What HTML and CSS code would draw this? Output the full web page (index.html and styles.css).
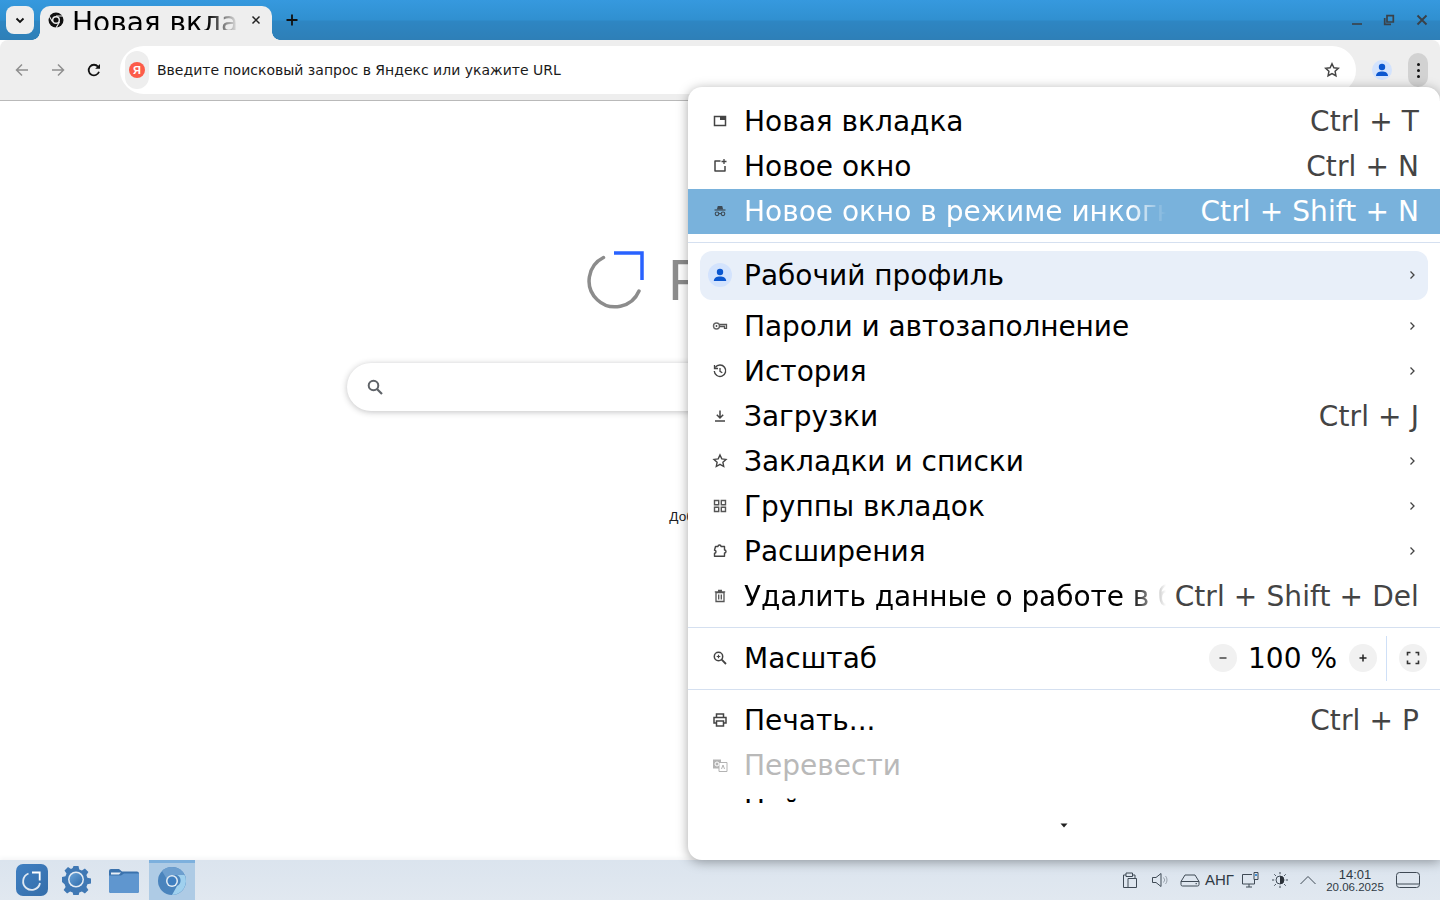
FILE: index.html
```html
<!DOCTYPE html>
<html lang="ru">
<head>
<meta charset="utf-8">
<title>Новая вкладка</title>
<link rel="stylesheet" href="styles.css">
</head>
<body>
<div class="screen">
  <header class="titlebar">
    <button class="tabsearch"><svg width="12" height="12" viewBox="0 0 12 12"><path d="M2.5 4.5 6 8l3.5-3.5" fill="none" stroke="#111" stroke-width="1.8"/></svg></button>
    <div class="tab">
      <svg class="tab-favicon" width="16" height="16" viewBox="0 0 16 16"><circle cx="8" cy="8" r="7.500" fill="#111"/><circle cx="8" cy="8" r="4" fill="#eee"/><circle cx="8" cy="8" r="2.600" fill="#111"/><path d="M8 4h7M4.600 10 1.300 4.300M11.500 10l-3.400 5.800" stroke="#eee" stroke-width="1.100"/></svg>
      <div class="tab-title">Новая вкладка</div>
      <svg class="tab-close" width="10" height="10" viewBox="0 0 10 10"><path d="M1.500 1.500l7 7M8.500 1.500l-7 7" stroke="#222" stroke-width="1.500"/></svg>
    </div>
    <button class="newtab"><svg width="12" height="12" viewBox="0 0 12 12"><path d="M6 .5v11M.5 6h11" stroke="#111" stroke-width="1.800"/></svg></button>
    <div class="winctrls">
      <svg width="12" height="12" viewBox="0 0 12 12"><path d="M1 10h10" stroke="#3a4148" stroke-width="1.600"/></svg>
      <svg width="12" height="12" viewBox="0 0 12 12"><path d="M1.700 4v6.300H8M4 1.700h6.300V8H4z" fill="none" stroke="#3a4148" stroke-width="1.700"/></svg>
      <svg class="win-close" width="12" height="12" viewBox="0 0 12 12"><path d="M1.500 1.500l9 9M10.500 1.500l-9 9" stroke="#3a4148" stroke-width="1.900"/></svg>
    </div>
  </header>

  <nav class="toolbar">
    <svg class="nav-ic" width="16" height="16" viewBox="0 0 16 16"><path d="M14 8H2.500M8 2.500 2.500 8 8 13.500" fill="none" stroke="#8f8f8f" stroke-width="1.500"/></svg>
    <svg class="nav-ic" width="16" height="16" viewBox="0 0 16 16"><path d="M2 8h11.500M8 2.500 13.500 8 8 13.500" fill="none" stroke="#8f8f8f" stroke-width="1.500"/></svg>
    <svg class="nav-ic" width="16" height="16" viewBox="0 0 16 16"><path d="M13 9.800A5.300 5.300 0 1 1 12 4.600" fill="none" stroke="#111" stroke-width="1.800"/><path d="M14 2v4.800H9.200z" fill="#111"/></svg>
    <div class="omnibox">
      <div class="chip"><span class="ya">Я</span></div>
      <span class="omni-text">Введите поисковый запрос в Яндекс или укажите URL</span>
      <svg class="omni-star" width="16" height="16" viewBox="0 0 16 16"><path d="M8 1.800l1.900 4 4.400.5-3.200 3 .8 4.400L8 11.500l-3.900 2.200.8-4.400-3.200-3 4.400-.5z" fill="none" stroke="#444" stroke-width="1.500"/></svg>
    </div>
    <span class="avatar"><svg width="14" height="14" viewBox="0 0 14 14"><circle cx="7" cy="4" r="3.200" fill="#0b57d0"/><path d="M1 13c0-3.300 2.700-4.600 6-4.600s6 1.300 6 4.600z" fill="#0b57d0"/></svg></span>
    <span class="kebab"><i></i><i></i><i></i></span>
  </nav>

  <main class="page">
    <div class="logo">
      <svg width="60" height="60" viewBox="0 0 60 60"><path d="M16.500 7.500A26 26 0 1 0 52 41" fill="none" stroke="#8c8c8c" stroke-width="3.500" stroke-linecap="round"/><path d="M27 3h28v27" fill="none" stroke="#2962ff" stroke-width="3.500"/></svg>
      <span class="logo-text">РЕД ОС</span>
    </div>
    <div class="search">
      <svg width="18" height="18" viewBox="0 0 18 18"><circle cx="7.500" cy="7.500" r="4.800" fill="none" stroke="#5f6368" stroke-width="2"/><path d="M11 11l5 5" stroke="#5f6368" stroke-width="2.200"/></svg>
    </div>
    <div class="addshortcut">Добавить ярлык</div>
  </main>

  <footer class="taskbar">
    <span class="start"><svg width="32" height="32" viewBox="0 0 32 32"><path d="M12.500 9.500A8.500 8.500 0 1 0 24 19" fill="none" stroke="#dfe8f2" stroke-width="1.800"/><path d="M16 8.500h7.700v8" fill="none" stroke="#fff" stroke-width="1.800"/></svg></span>
    <span class="tb-app"><svg width="30" height="30" viewBox="0 0 30 30"><path d="M12.500 1.500h5l.8 3.500 2.600 1 3-2 3.500 3.500-2 3 1 2.700 3.600.8v5l-3.600.8-1 2.600 2 3-3.500 3.500-3-2-2.600 1-.8 3.600h-5l-.8-3.600-2.600-1-3 2-3.500-3.500 2-3-1-2.600L1 17.500v-5l3.500-.8 1-2.700-2-3L7 2.500l3 2 1.700-1z" fill="#3f78b4" transform="translate(0 -.5)"/><circle cx="15" cy="14.500" r="8" fill="#e3ebf3"/><circle cx="15" cy="14.500" r="6.500" fill="url(#g1)"/><defs><linearGradient id="g1" x1="0" y1="0" x2="1" y2="1"><stop offset="0" stop-color="#6aa3d8"/><stop offset="1" stop-color="#2f6cab"/></linearGradient></defs></svg></span>
    <span class="tb-app"><svg width="32" height="28" viewBox="0 0 32 28"><path d="M1 5a2 2 0 0 1 2-2h8l3 2.500h15a2 2 0 0 1 2 2V25a2 2 0 0 1-2 2H3a2 2 0 0 1-2-2z" fill="#3a72ad"/><path d="M1 9.500h12l3-2h15V25a2 2 0 0 1-2 2H3a2 2 0 0 1-2-2z" fill="#5f96cf"/><path d="M3 8.500h8l2-2H3z" fill="#e8eff7"/></svg></span>
    <span class="tb-active"><svg width="28" height="28" viewBox="0 0 28 28"><circle cx="14" cy="14" r="14" fill="#4a84bd"/><path d="M14 0a14 14 0 0 1 12.600 8H14a6 6 0 0 0-5.500 3.500L4 4A14 14 0 0 1 14 0z" fill="#6d9fcf"/><path d="M26.600 8A14 14 0 0 1 14 28l5-9a6 6 0 0 0 0-11z" fill="#9fd0ee"/><circle cx="14" cy="14" r="6" fill="#e4edf5"/><circle cx="14" cy="14" r="4.500" fill="#3f7fc0"/></svg></span>
    <div class="tray">
      <svg class="t-clip" width="18" height="18" viewBox="0 0 18 18"><path d="M2.500 16.500V4h2.500M11.500 4h2.500v3M5 2h6.500v3.500H5zM7 7.500h8.500v9H7zM2.500 16.500H7" fill="none" stroke="#3f4a55" stroke-width="1"/></svg>
      <svg class="t-vol" width="18" height="18" viewBox="0 0 18 18"><path d="M1.500 6.500h3.500L10 2.500v13L5 11.500H1.500z" fill="none" stroke="#3f4a55" stroke-width="1"/><path d="M12.500 6.500a3.500 3.500 0 0 1 0 5M14.500 5a6 6 0 0 1 0 8" fill="none" stroke="#9aa3ad" stroke-width="1"/></svg>
      <svg class="t-drive" width="20" height="18" viewBox="0 0 20 18"><path d="M1 10.500 5 4h10l4 6.500v3a1.500 1.500 0 0 1-1.500 1.500h-15A1.500 1.500 0 0 1 1 13.500zM1 10.500h18M15.500 12.700h1.500" fill="none" stroke="#3f4a55" stroke-width="1"/></svg>
      <span class="lang">АНГ</span>
      <svg class="t-net" width="18" height="18" viewBox="0 0 18 18"><path d="M11 3.500H1.500v9.500h12V9M5 16h6M8 13v3" fill="none" stroke="#3f4a55" stroke-width="1"/><path d="M13 1.500h4v7h-4z" fill="#dfe6ee" stroke="#3f4a55" stroke-width="1"/><path d="M14 3h2v2h-2z" fill="#3f8fd8"/></svg>
      <svg class="t-sun" width="18" height="18" viewBox="0 0 18 18"><circle cx="9" cy="9" r="4" fill="none" stroke="#3f4a55" stroke-width="1"/><path d="M9 5a4 4 0 0 1 0 8z" fill="#2b3138"/><path d="M9 1v2.200M9 14.800V17M1 9h2.200M14.800 9H17M3.300 3.300l1.600 1.600M13.100 13.100l1.600 1.600M3.300 14.700l1.600-1.600M13.100 4.900l1.600-1.600" stroke="#3f4a55" stroke-width="1"/></svg>
      <svg class="t-up" width="18" height="18" viewBox="0 0 18 18"><path d="M1.500 13 9 5.500l7.500 7.500" fill="none" stroke="#3f4a55" stroke-width="1"/></svg>
      <div class="clock"><span class="clock-time">14:01</span><span class="clock-date">20.06.2025</span></div>
      <svg class="t-desk" width="24" height="18" viewBox="0 0 24 18"><rect x=".5" y="1.500" width="23" height="15" rx="3" fill="none" stroke="#3f4a55" stroke-width="1"/><path d="M1 13h22" stroke="#3f4a55" stroke-width="1"/></svg>
    </div>
  </footer>

  <div class="menu">
    <div class="menu-scroll">
      <div class="row"><svg class="mi" viewBox="0 0 16 16"><path d="M2.500 3.500h11v9h-11z" fill="none" stroke="#444" stroke-width="1.500"/><path d="M8 3.500h5.500v3.500H8z" fill="#444"/></svg><span class="label">Новая вкладка</span><span class="key">Ctrl + T</span></div>
      <div class="row"><svg class="mi" viewBox="0 0 16 16"><path d="M8.500 3H3v10h10V8" fill="none" stroke="#444" stroke-width="1.500" stroke-linejoin="round"/><path d="M12 1v5M9.500 3.500h5" stroke="#444" stroke-width="1.300"/></svg><span class="label">Новое окно</span><span class="key">Ctrl + N</span></div>
      <div class="row row-hot"><svg class="mi" viewBox="0 0 16 16"><path d="M5.800 3h4.400l1 3.500H4.800z" fill="#3d4a55"/><path d="M2.500 7h11" stroke="#3d4a55" stroke-width="1.200"/><circle cx="5" cy="10.800" r="1.800" fill="none" stroke="#3d4a55" stroke-width="1.100"/><circle cx="11" cy="10.800" r="1.800" fill="none" stroke="#3d4a55" stroke-width="1.100"/><path d="M6.800 10.600h2.400" stroke="#3d4a55" stroke-width="1.100"/></svg><span class="label label-fade">Новое окно в режиме инкогнито</span><span class="key">Ctrl + Shift + N</span></div>
      <div class="sep"></div>
      <div class="row row-profile"><span class="mi-badge"><svg width="14" height="14" viewBox="0 0 14 14"><circle cx="7" cy="4" r="3.200" fill="#0b57d0"/><path d="M.8 13c0-3.300 2.800-4.600 6.200-4.600s6.200 1.300 6.200 4.600z" fill="#0b57d0"/></svg></span><span class="label">Рабочий профиль</span><svg class="chev" viewBox="0 0 10 10"><path d="M3.500 1.500 7 5 3.500 8.500" fill="none" stroke="#444" stroke-width="1.300"/></svg></div>
      <div class="row"><svg class="mi" viewBox="0 0 16 16"><circle cx="4.500" cy="8" r="3" fill="none" stroke="#666" stroke-width="1.400"/><circle cx="4.500" cy="8" r=".9" fill="#444"/><path d="M7.500 6.500h7v3.800h-2V8.500h-5" fill="none" stroke="#555" stroke-width="1.300"/></svg><span class="label label-tight">Пароли и автозаполнение</span><svg class="chev" viewBox="0 0 10 10"><path d="M3.500 1.500 7 5 3.500 8.500" fill="none" stroke="#444" stroke-width="1.300"/></svg></div>
      <div class="row"><svg class="mi" viewBox="0 0 16 16"><path d="M3.300 4.500A5.700 5.700 0 1 1 2.300 8" fill="none" stroke="#444" stroke-width="1.400"/><path d="M2.500 2v3.500H6" fill="none" stroke="#444" stroke-width="1.300"/><path d="M8 5v3.300l2.300 1.400" fill="none" stroke="#444" stroke-width="1.300"/></svg><span class="label">История</span><svg class="chev" viewBox="0 0 10 10"><path d="M3.500 1.500 7 5 3.500 8.500" fill="none" stroke="#444" stroke-width="1.300"/></svg></div>
      <div class="row"><svg class="mi" viewBox="0 0 16 16"><path d="M8 2.500v7M4.800 6.800 8 10l3.200-3.200" fill="none" stroke="#444" stroke-width="1.500"/><path d="M3 13h10" stroke="#444" stroke-width="1.500"/></svg><span class="label">Загрузки</span><span class="key">Ctrl + J</span></div>
      <div class="row"><svg class="mi" viewBox="0 0 16 16"><path d="M8 2l1.800 3.900 4.200.5-3.100 2.900.8 4.200L8 11.400l-3.700 2.100.8-4.200L2 6.400l4.200-.5z" fill="none" stroke="#444" stroke-width="1.400"/></svg><span class="label">Закладки и списки</span><svg class="chev" viewBox="0 0 10 10"><path d="M3.500 1.500 7 5 3.500 8.500" fill="none" stroke="#444" stroke-width="1.300"/></svg></div>
      <div class="row"><svg class="mi" viewBox="0 0 16 16"><path d="M2.500 2.500h4.200v4.200H2.500zM9.300 2.500h4.200v4.200H9.300zM2.500 9.300h4.200v4.200H2.500zM9.300 9.300h4.200v4.200H9.300z" fill="none" stroke="#555" stroke-width="1.400"/></svg><span class="label">Группы вкладок</span><svg class="chev" viewBox="0 0 10 10"><path d="M3.500 1.500 7 5 3.500 8.500" fill="none" stroke="#444" stroke-width="1.300"/></svg></div>
      <div class="row"><svg class="mi" viewBox="0 0 16 16"><path d="M3.500 3.500H6a1.500 1.500 0 0 1 3 0h3.500v3.500a1.500 1.500 0 0 1 0 3v3.300H2.500v-3a1.500 1.500 0 0 0 0-3z" fill="none" stroke="#444" stroke-width="1.400" stroke-linejoin="round"/></svg><span class="label">Расширения</span><svg class="chev" viewBox="0 0 10 10"><path d="M3.500 1.500 7 5 3.500 8.500" fill="none" stroke="#444" stroke-width="1.300"/></svg></div>
      <div class="row"><svg class="mi" viewBox="0 0 16 16"><path d="M4 4.500h8v9H4zM2.800 3.800h10.400M6 2.500h4M6.700 6.500v5M9.300 6.500v5" fill="none" stroke="#555" stroke-width="1.300"/></svg><span class="label label-fade label-tight">Удалить данные о работе в браузере</span><span class="key">Ctrl + Shift + Del</span></div>
      <div class="sep"></div>
      <div class="row row-zoom"><svg class="mi" viewBox="0 0 16 16"><circle cx="6.500" cy="6.500" r="4.200" fill="none" stroke="#444" stroke-width="1.500"/><path d="M9.700 9.700 14 14" stroke="#444" stroke-width="1.800"/><path d="M4.700 6.500h3.600M6.500 4.700v3.600" stroke="#444" stroke-width="1.200"/></svg><span class="label">Масштаб</span>
        <div class="zoom">
          <span class="zbtn"><svg width="10" height="10" viewBox="0 0 10 10"><path d="M1.500 5h7" stroke="#444" stroke-width="1.500"/></svg></span>
          <span class="zval">100 %</span>
          <span class="zbtn"><svg width="10" height="10" viewBox="0 0 10 10"><path d="M1.500 5h7M5 1.500v7" stroke="#222" stroke-width="1.500"/></svg></span>
          <span class="zdiv"></span>
          <span class="zbtn"><svg width="14" height="14" viewBox="0 0 14 14"><path d="M1.500 4.500v-3h3M9.500 1.500h3v3M12.500 9.500v3h-3M4.500 12.500h-3v-3" fill="none" stroke="#333" stroke-width="1.600"/></svg></span>
        </div>
      </div>
      <div class="sep"></div>
      <div class="row row-print"><svg class="mi" viewBox="0 0 16 16"><path d="M4.500 5V2h7v3M4.500 11H2V5.500h12V11h-2.500M4.500 9h7v5h-7z" fill="none" stroke="#444" stroke-width="1.500"/></svg><span class="label">Печать...</span><span class="key">Ctrl + P</span></div>
      <div class="row row-off"><svg class="mi" viewBox="0 0 16 16"><path d="M1 2.500h8v9H1z" fill="#b3b3b3"/><path d="M7 5.500h8v9H7z" fill="#fff" stroke="#b3b3b3"/><path d="M9.500 12l1.500-4 1.500 4" fill="none" stroke="#b3b3b3"/><circle cx="5" cy="7" r="2" fill="none" stroke="#fff"/></svg><span class="label">Перевести</span></div>
      <div class="row"><span class="mi-blank"></span><span class="label">Найти и изменить</span></div>
    </div>
    <svg class="menu-more" width="8" height="5" viewBox="0 0 8 5"><path d="M.5.500h7L4 4.500z" fill="#222"/></svg>
  </div>
</div>
</body>
</html>
```

FILE: styles.css
```css
* { box-sizing: border-box; }
html, body { margin: 0; padding: 0; }
body { font-family: "DejaVu Sans", sans-serif; color: #111; background: #fff; }
.screen { position: relative; width: 1440px; height: 900px; overflow: hidden; display: flex; flex-direction: column; }

/* title bar */
.titlebar {
  height: 40px; flex: none; display: flex; align-items: flex-start; padding: 6px 0 0 6px;
  background: linear-gradient(#3699de 0, #3090d0 20px, #2e86c3 21px, #2e7fb7 40px);
}
button { border: 0; padding: 0; background: none; display: flex; align-items: center; justify-content: center; }
.tabsearch { width: 28px; height: 28px; border-radius: 8px; background: #eeeeee; }
.tab {
  position: relative; margin-left: 6px; width: 232px; height: 34px; padding: 0 11px 0 8px;
  background: #eeeeee; border-radius: 10px 10px 0 0; display: flex; align-items: center; gap: 8px;
}
.tab::before, .tab::after { content: ""; position: absolute; bottom: 0; width: 8px; height: 8px; }
.tab::before { left: -8px; background: radial-gradient(circle at 0 0, transparent 7.5px, #eeeeee 8px); }
.tab::after { right: -8px; background: radial-gradient(circle at 100% 0, transparent 7.5px, #eeeeee 8px); }
.tab-favicon { flex: none; margin-top: -6px; }
.tab-title {
  flex: 1; min-width: 0; height: 20px; margin-top: -6px; overflow: hidden; white-space: nowrap; font-size: 28px; line-height: 25px; color: #000;
  -webkit-mask-image: linear-gradient(to right, #000 calc(100% - 36px), transparent calc(100% - 4px));
  mask-image: linear-gradient(to right, #000 calc(100% - 36px), transparent calc(100% - 4px));
}
.tab-close { flex: none; margin-top: -6px; }
.newtab { width: 28px; height: 28px; margin-left: 6px; }
.winctrls { margin-left: auto; display: flex; gap: 20px; padding: 0 12px 0 0; margin-top: 8px; }
.winctrls svg { display: block; }
.winctrls .win-close { margin-left: 1px; }

/* toolbar */
.toolbar {
  height: 61px; flex: none; display: flex; align-items: center; background: #eeeeee;
  border-radius: 8px 8px 0 0; padding-left: 14px; border-bottom: 1px solid #b9b9b9;
}
.nav-ic { flex: none; margin-right: 20px; }
.nav-ic:nth-child(3) { margin-right: 18px; }
.omnibox {
  width: 1236px; height: 48px; background: #fff; border-radius: 24px; display: flex; align-items: center; padding: 0 16px 0 5px;
}
.chip { width: 24px; height: 38px; border-radius: 12px; background: #eeeeee; display: flex; align-items: center; justify-content: center; flex: none; }
.ya { width: 16px; height: 16px; border-radius: 50%; background: #fc5c4a; color: #fff; font: bold 11px/16px "Liberation Sans", sans-serif; text-align: center; display: block; }
.omni-text { margin-left: 8px; font-size: 14px; color: #1a1a1a; white-space: nowrap; }
.omni-star { margin-left: auto; flex: none; }
.avatar { width: 20px; height: 20px; border-radius: 50%; background: #d3e3fd; margin-left: 16px; display: flex; align-items: center; justify-content: center; flex: none; }
.kebab { width: 20px; height: 34px; border-radius: 10px; background: #d2d2d2; margin-left: 16px; display: flex; flex-direction: column; align-items: center; justify-content: center; gap: 3px; flex: none; }
.kebab i { width: 3px; height: 3px; border-radius: 50%; background: #111; display: block; }

/* page */
.page { flex: 1; min-height: 0; background: #fff; display: flex; flex-direction: column; padding-top: 148px; }
.logo { display: flex; align-items: center; gap: 21px; margin-left: 587px; height: 62px; }
.logo svg { flex: none; }
.logo-text { font: 58px/62px "Liberation Sans", sans-serif; color: #8c8c8c; white-space: nowrap; }
.search {
  margin: 52px 0 0 347px; width: 746px; height: 48px; border-radius: 24px; background: #fff;
  box-shadow: 0 1px 6px rgba(32, 33, 36, .28); display: flex; align-items: center; padding-left: 19px;
}
.addshortcut { margin: 98px 0 0; text-align: center; font: 13.5px/16px "Liberation Sans", sans-serif; color: #202124; }

/* taskbar */
.taskbar { height: 40px; flex: none; display: flex; align-items: center; padding-left: 16px; background: linear-gradient(#dbe4ee, #e1e8f0); box-shadow: 0 -2px 4px rgba(60, 80, 110, .06); }
.start { width: 32px; height: 32px; border-radius: 7px; background: linear-gradient(135deg, #3f7fc2, #356eaa); flex: none; display: block; }
.start svg { display: block; }
.tb-app { display: flex; align-items: center; justify-content: center; flex: none; }
.tb-app:nth-child(2) { margin-left: 13px; }
.tb-app:nth-child(3) { margin-left: 17px; }
.tb-active { width: 46px; height: 40px; margin-left: 9px; background: #aecbe5; border-top: 3px solid #7db0dd; display: flex; align-items: center; justify-content: center; flex: none; padding-bottom: 2px; }
.tray { margin-left: auto; display: flex; align-items: center; padding-right: 20px; }
.tray svg { flex: none; display: block; }
.t-clip { margin-right: 12px; }
.t-vol { margin-right: 11px; }
.t-drive { margin-right: 5px; }
.t-net { margin-right: 12px; }
.t-sun { margin-right: 10px; }
.t-up { margin-right: 9px; }
.t-desk { margin-left: 12px; }
.lang { font: 15px/18px "Liberation Sans", sans-serif; color: #2f3a45; margin-right: 6px; width: 30px; white-space: nowrap; }
.clock { display: flex; flex-direction: column; align-items: center; font-family: "Liberation Sans", sans-serif; color: #2f3a45; width: 58px; }
.clock-time { font-size: 13px; line-height: 13px; }
.clock-date { font-size: 11.5px; line-height: 12px; }

/* menu */
.menu {
  position: absolute; left: 688px; top: 87px; width: 752px; height: 773px; background: #fff; border-radius: 14px 14px 0 14px;
  box-shadow: 0 2px 12px rgba(0, 0, 0, .35);
}
.menu-scroll { position: absolute; top: 12px; left: 0; right: 0; height: 704px; overflow: hidden; }
.menu-more { position: absolute; left: 372px; top: 736px; }
.row { height: 45px; display: flex; align-items: center; padding: 0 21px 0 24px; font-size: 28px; color: #000; white-space: nowrap; }
.mi { width: 16px; height: 16px; flex: none; margin: -2px 16px 0 0; }
.mi-blank { width: 16px; flex: none; margin-right: 16px; }
.label { flex: 1; min-width: 0; overflow: hidden; }
.label-tight { letter-spacing: -.08px; }
.label-fade {
  flex: none; width: 424px;
  -webkit-mask-image: linear-gradient(to right, #000 calc(100% - 38px), transparent calc(100% - 2px));
  mask-image: linear-gradient(to right, #000 calc(100% - 38px), transparent calc(100% - 2px));
}
.key { flex: none; margin-left: auto; color: #444; letter-spacing: .1px; }
.chev { width: 10px; height: 10px; flex: none; margin: -2px 2px 0 0; }
.row-hot { background: #79b2dc; color: #fff; }
.row-hot .key { color: #fff; }
.row-profile { height: 49px; margin: 0 12px 4px; padding: 0 9px 0 8px; background: #e8eff9; border-radius: 12px; }
.mi-badge { width: 24px; height: 24px; border-radius: 50%; background: #d3e3fd; display: flex; align-items: center; justify-content: center; flex: none; margin: -1px 12px 0 0; }
.sep { height: 1px; margin: 8px 0; background: #d5e0f0; }
.row-zoom { padding-right: 13px; }
.zoom { display: flex; align-items: center; flex: none; }
.zbtn { width: 28px; height: 28px; border-radius: 50%; background: #f1f1f1; display: flex; align-items: center; justify-content: center; flex: none; margin-top: -2px; }
.zval { margin: 0 12px 0 11px; }
.zdiv { width: 1px; height: 45px; background: #cfe0f7; margin: 0 12px 0 9px; }
.row-off { color: #b9b9b9; }
```
